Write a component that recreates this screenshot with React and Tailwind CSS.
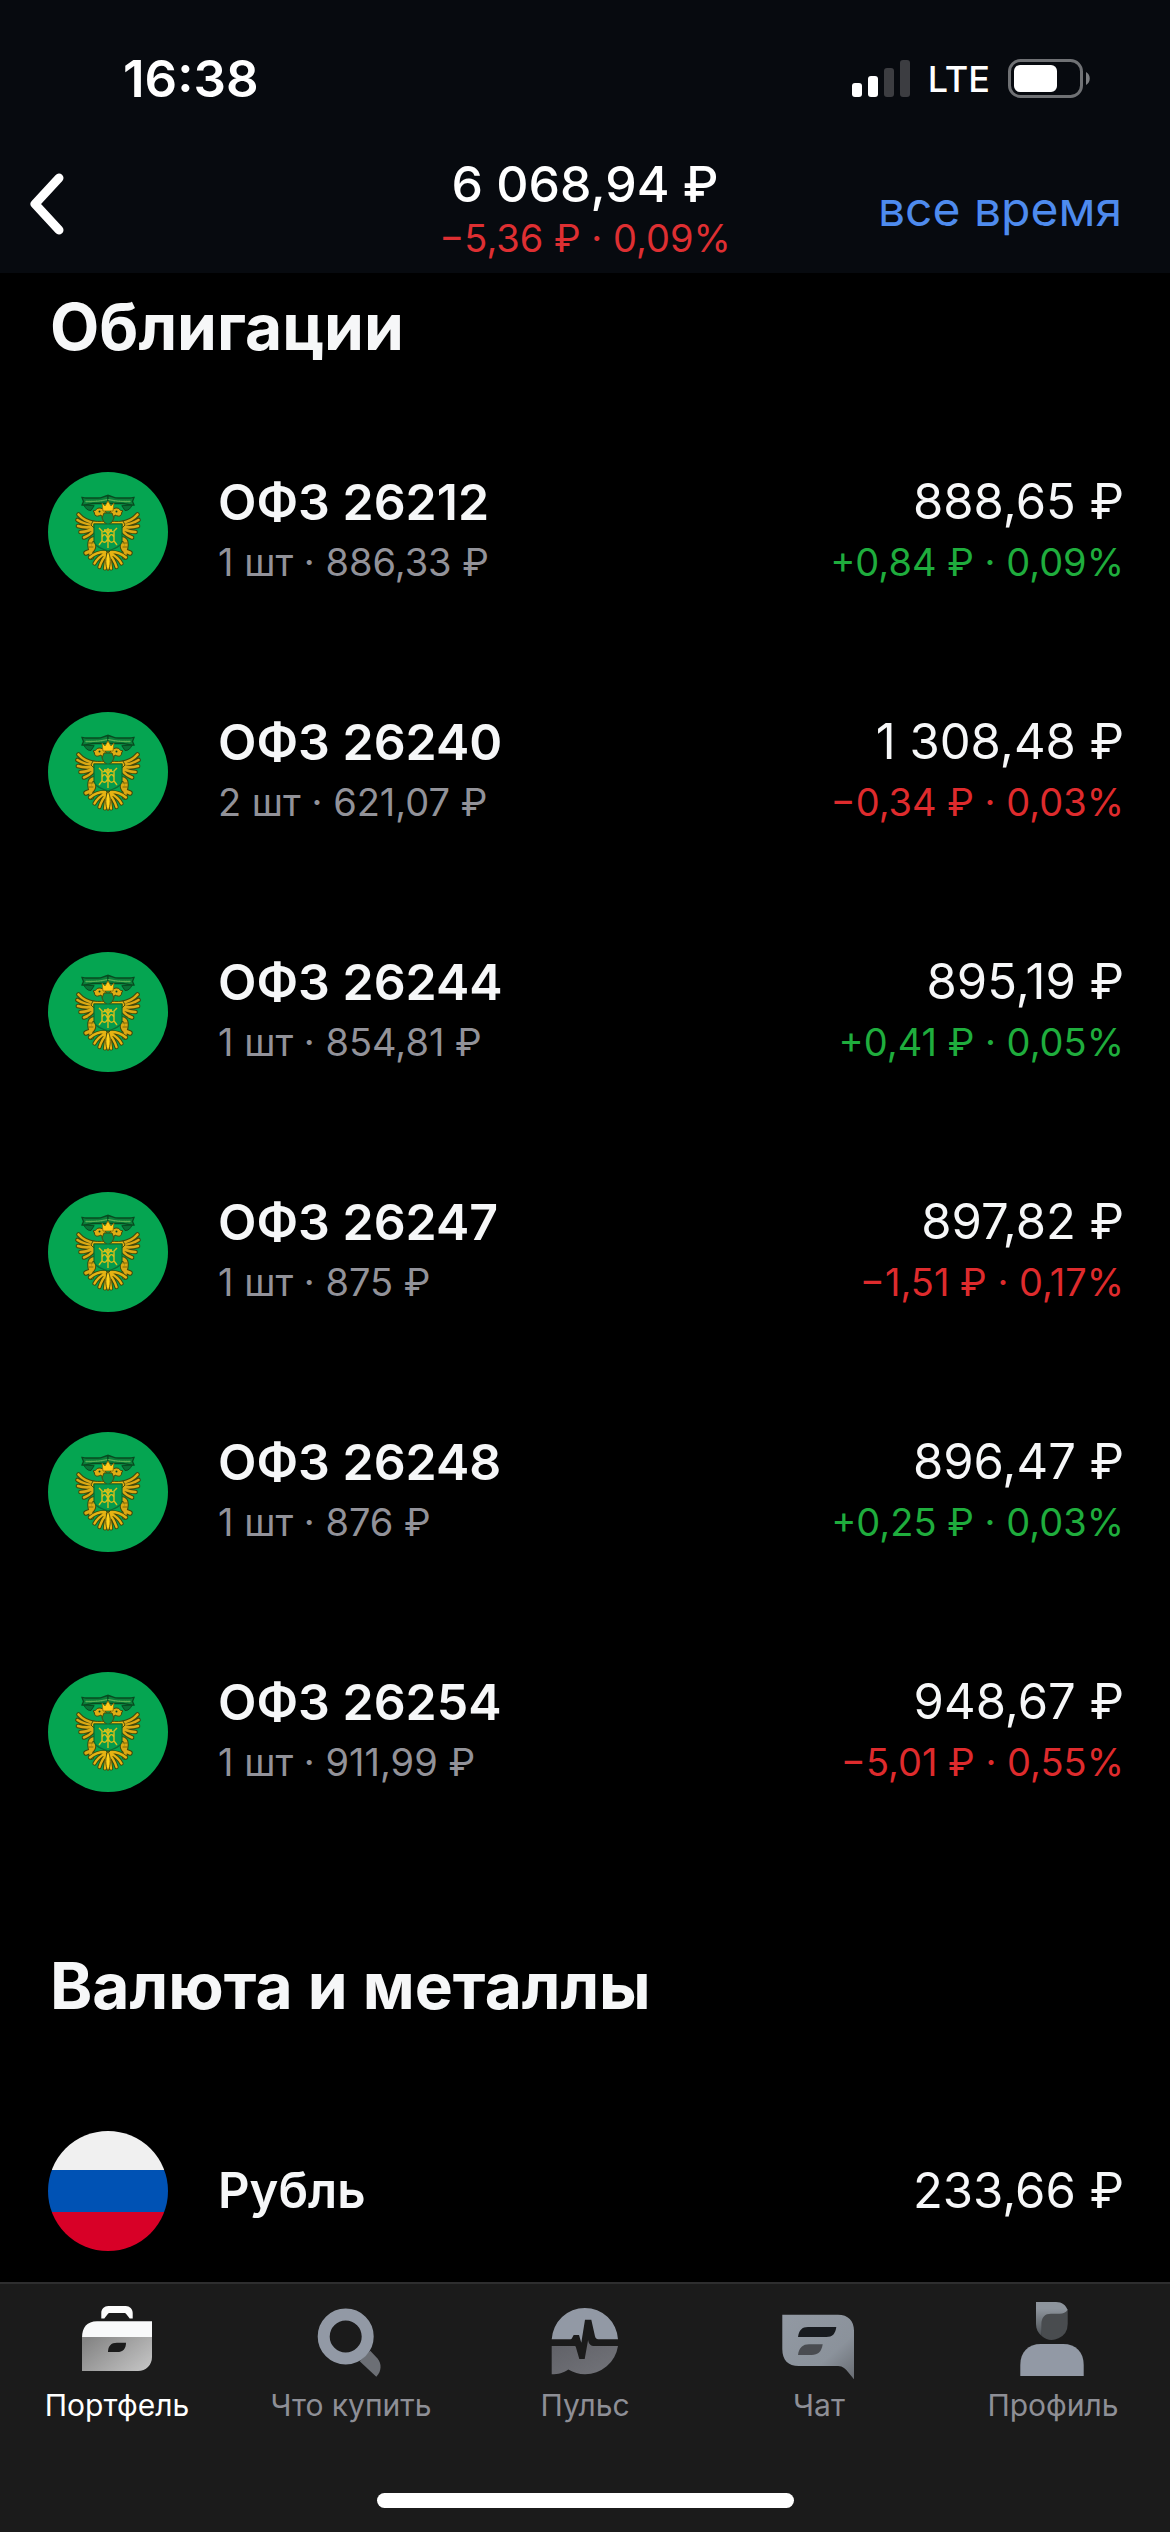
import React from "react";

const bonds = [
  { name: "ОФЗ 26212", detail: "1 шт · 886,33 ₽", value: "888,65 ₽", change: "+0,84 ₽ · 0,09%", up: true },
  { name: "ОФЗ 26240", detail: "2 шт · 621,07 ₽", value: "1 308,48 ₽", change: "−0,34 ₽ · 0,03%", up: false },
  { name: "ОФЗ 26244", detail: "1 шт · 854,81 ₽", value: "895,19 ₽", change: "+0,41 ₽ · 0,05%", up: true },
  { name: "ОФЗ 26247", detail: "1 шт · 875 ₽", value: "897,82 ₽", change: "−1,51 ₽ · 0,17%", up: false },
  { name: "ОФЗ 26248", detail: "1 шт · 876 ₽", value: "896,47 ₽", change: "+0,25 ₽ · 0,03%", up: true },
  { name: "ОФЗ 26254", detail: "1 шт · 911,99 ₽", value: "948,67 ₽", change: "−5,01 ₽ · 0,55%", up: false },
];

function StatusIcons() {
  return (
    <div className="flex items-center gap-[18px]">
      <svg className="h-[38px] w-[58px]" viewBox="0 0 58 38" aria-hidden="true">
        <rect x="0" y="23" width="10" height="14" rx="3" fill="#fff" />
        <rect x="16" y="16" width="10" height="21" rx="3" fill="#fff" />
        <rect x="32" y="8" width="10" height="29" rx="3" fill="#3c3d41" />
        <rect x="48" y="0" width="10" height="37" rx="3" fill="#3c3d41" />
      </svg>
      <span className="text-[36px] leading-[52px] font-medium">LTE</span>
      <svg className="h-[40px] w-[83px]" viewBox="0 0 83 40" aria-hidden="true">
        <rect x="1.5" y="1.5" width="72" height="36" rx="11" fill="none" stroke="#6f7174" strokeWidth="3" />
        <rect x="6" y="6" width="43" height="27" rx="6" fill="#fff" />
        <path d="M78 13c5 2.500 5 10.500 0 13z" fill="#7d7f82" />
      </svg>
    </div>
  );
}

const WING = "M46 51Q36 49 30.500 42.500M45 53Q36 52 29.500 48M45 55Q36 56 30 54M45 57Q38 60 32.500 60M45.500 59Q41 64 36 65.500";
const TAIL = "M57 80Q48 80 42 85.500M58 81Q50 85 46.500 91.500M59 82Q54 87 51.500 95M60 82Q57.500 88 57 96.500";
const LEG = "M45.500 67Q40.500 68 42.500 77M45.500 72Q46 77 43 79Q40 80 38 81M42.500 79L43.500 85";

function EmblemHalf() {
  return (
    <g strokeLinecap="round" fill="none">
      <path d="M60 23.500c-4 .5-6 2.500-10 2.500h-12c-2 0-3-.5-4-.5l1.500 4-1.500 3.500c4 .5 7-1.500 13-1.500h13z" fill="#0b7f3a" stroke="#084a20" strokeWidth="1.300" />
      <path d="M38 29.500c8 0 12 0 22-2" stroke="#58b154" strokeWidth="1.300" strokeDasharray="1.500 1" />
      <path d="M36 33.500c2 3 3 5 7 5l3-4.500z" fill="#0a7035" stroke="#084a20" />
      <path d={WING} stroke="#3f470c" strokeWidth="4.600" />
      <path d={WING} stroke="#dba914" strokeWidth="2.600" />
      <path d={LEG} stroke="#3f470c" strokeWidth="5.400" />
      <path d={LEG} stroke="#dba914" strokeWidth="3.400" />
      <path d="M41 71h4M41 75h4" stroke="#7d6a0b" />
      <path d={TAIL} stroke="#3f470c" strokeWidth="4.200" />
      <path d={TAIL} stroke="#e5b313" strokeWidth="2.400" />
      <path d="M60 49c-4 0-9 1-15 0l-2 4 3 3v-4h14z" fill="#e8b413" stroke="#4a4d0c" />
      <path d="M58 49c-3-1-4-4-5-6-2 1-5 2-6 0-1-1 0-3-2-4 4 0 3-3.500 7-3 4 .5 6 3 7 7z" fill="#e0ae14" stroke="#3f470c" />
      <circle cx="51.500" cy="39.500" r="1" fill="#084a20" />
    </g>
  );
}

function BondEmblem() {
  return (
    <svg className="size-[120px] shrink-0" viewBox="0 0 120 120" aria-hidden="true">
      <circle cx="60" cy="60" r="60" fill="#05a551" />
      <EmblemHalf />
      <g transform="matrix(-1 0 0 1 120 0)">
        <EmblemHalf />
      </g>
      <path d="M56 41h8l2 5-2 4-4 3-4-3-2-4z" fill="#0b9548" stroke="#4a4d0c" strokeWidth="1" />
      <path d="M54 31l3 3 3-5 3 5 3-3-1 8H55z" fill="#ffc91a" stroke="#7d6a0b" strokeWidth=".8" />
      <path d="M46 52h28v16c0 6-6 8-14 11-8-3-14-5-14-11z" fill="#069c4c" stroke="#0b6b33" strokeWidth="1.200" />
      <path d="M51 56l3 3v10l-3 4M69 56l-3 3v10l3 4M60 56v20M56 58h8M55 60c3-2 4 0 5 3 1-3 2-5 5-3M54 65c2-4 5-3 6 4 1-7 4-8 6-4M54 69c3 3 5 0 6-3 1 3 3 6 6 3" fill="none" stroke="#d9c01a" strokeWidth="1.400" />
      <path d="M60 79c-3 6-3 15 0 20 3-5 3-14 0-20z" fill="#ffd01a" stroke="#4a4d0c" strokeWidth=".9" />
    </svg>
  );
}

function RubleFlag() {
  return (
    <div className="flex size-[120px] shrink-0 flex-col overflow-hidden rounded-full" aria-hidden="true">
      <div className="h-[39px] bg-[#f0f0f0]" />
      <div className="h-[42px] bg-[#0052b4]" />
      <div className="h-[39px] bg-[#d80027]" />
    </div>
  );
}

function BriefcaseIcon() {
  return (
    <svg className="size-20" viewBox="0 0 80 80" aria-hidden="true">
      <defs>
        <linearGradient id="case" x1="0" y1="0.2" x2="1" y2="0.8">
          <stop offset="0" stopColor="#858585" />
          <stop offset="1" stopColor="#c2c2c2" />
        </linearGradient>
      </defs>
      <path d="M24.300 19.500V14c0-4 3-7 7-7h17.400c4 0 7 3 7 7v5.500h-3l-3.500-4.500c-.6-.8-1-1-2-1H32.800c-1 0-1.400.2-2 1l-3.500 4.500z" fill="#fcfcfc" />
      <path d="M5 38.500C5 28.500 10 22.300 20 22.300h55v16.200z" fill="#f8f9fa" />
      <path d="M5 38h70v20c0 8-6 14-14 14H5zM31 53c0-6 3-9.300 9-9.300h9c0 6-3 9.300-9 9.300z" fill="url(#case)" fillRule="evenodd" />
    </svg>
  );
}

function SearchIcon() {
  return (
    <svg className="size-20" viewBox="0 0 80 80" aria-hidden="true">
      <path d="M48.700 62.300L59.300 51.700l7 7.500c4.500 5 4.500 13 -1 18.500z" fill="#6c6f75" />
      <circle cx="34.700" cy="37.500" r="22" fill="none" stroke="#9299a5" strokeWidth="12" />
    </svg>
  );
}

function PulseIcon() {
  return (
    <svg className="size-20" viewBox="0 0 80 80" aria-hidden="true">
      <defs>
        <linearGradient id="pulseLow" x1="0" y1="0" x2="1" y2="1">
          <stop offset="0" stopColor="#5f6066" />
          <stop offset="1" stopColor="#73747a" />
        </linearGradient>
      </defs>
      <path d="M6.700 40.300a33.200 33.200 0 0 1 66.300 0H55c-3 0-4.500-.5-5-3l-3.700-16.600H40L36.300 43.700 34 36h-5.300l-1.500 2.800c-.5 1-1 1.500-2.500 1.500z" fill="#9299a5" />
      <path d="M6.700 47h23l1 .5L34.300 60h5.400l3.400-19c.7 4 2.500 6 6.500 6H73a33.200 33.200 0 0 1-33.200 28.200c-6 0-11-1.500-16.500-4.700-5 3.500-10 4.700-16.600 4.700z" fill="url(#pulseLow)" />
    </svg>
  );
}

function ChatIcon() {
  return (
    <svg className="size-20" viewBox="0 0 80 80" aria-hidden="true">
      <defs>
        <linearGradient id="chat" x1="0" y1="0" x2="1" y2="1">
          <stop offset="0" stopColor="#9299a3" />
          <stop offset="0.650" stopColor="#8b929b" />
          <stop offset="1" stopColor="#686c72" />
        </linearGradient>
      </defs>
      <path d="M3.300 15.700H59c10 0 16 6 16 16v48.600l-6-7.300c-4-5-6-6-12-6H20c-11 0-16.700-6-16.700-17z" fill="url(#chat)" />
      <path d="M19 38c1-7 4-10 10-10h28.300c-1 7-4 10-10 10z" fill="#181b1f" />
      <path d="M19 56c1-7.500 5-10.700 11-10.700h13.700c-1 7.500-5 10.700-11 10.700z" fill="#4a4c51" />
    </svg>
  );
}

function ProfileIcon() {
  return (
    <svg className="size-20" viewBox="0 0 80 80" aria-hidden="true">
      <defs>
        <linearGradient id="hair" x1="0" y1="0" x2="0" y2="1">
          <stop offset="0.200" stopColor="#8e959d" />
          <stop offset="1" stopColor="#4c5054" />
        </linearGradient>
      </defs>
      <path d="M54.700 10v15a15.800 15.800 0 0 1-26 12V14z" fill="#494c4f" />
      <path d="M23 3h20c6 0 10 3 11.500 8-2 2.700-4 3.700-8 3.700H38c-6 0-9.300 3.300-9.300 9.300v13C25 34 23 30 23 25z" fill="url(#hair)" />
      <path d="M7.300 77V66C7.300 53 15 45 28 45h22c13 0 20.700 8 20.700 21v11z" fill="#9299a5" />
    </svg>
  );
}

const tabs = [
  { label: "Портфель", Icon: BriefcaseIcon, active: true },
  { label: "Что купить", Icon: SearchIcon },
  { label: "Пульс", Icon: PulseIcon },
  { label: "Чат", Icon: ChatIcon },
  { label: "Профиль", Icon: ProfileIcon },
];

export default function App() {
  return (
    <div className="flex min-h-screen flex-col bg-black font-['Inter',sans-serif] text-[#f6f7f8]">
      <header className="sticky top-0 bg-[#070a0f] pb-2 text-white">
        <div className="flex h-[157px] items-center justify-between pr-[79px] pl-[123px]">
          <time className="text-[51px] leading-[60px] font-semibold">16:38</time>
          <StatusIcons />
        </div>
        <div className="grid h-[108px] grid-cols-[1fr_auto_1fr] items-center">
          <button type="button" aria-label="Назад" className="mb-4 ml-7 justify-self-start">
            <svg className="h-16 w-10" viewBox="0 0 40 64" fill="none" stroke="#fff" strokeWidth="9" strokeLinecap="round" strokeLinejoin="round" aria-hidden="true">
              <path d="M31 7L7 33l24 26" />
            </svg>
          </button>
          <h1 className="flex flex-col text-center">
            <span className="text-[50px] leading-[54px] font-medium">6 068,94 ₽</span>
            <span className="text-[38px] leading-[54px] font-normal text-[#de2f32]">−5,36 ₽ · 0,09%</span>
          </h1>
          <button type="button" className="mr-12 mb-1 justify-self-end text-[48px] leading-[60px] text-[#4e8bee]">
            все время
          </button>
        </div>
      </header>

      <main className="flex-1 pr-[46px] pl-12">
        <section>
          <h2 className="px-0.5 pt-[15px] pb-[46px] text-[64px] leading-[78px] font-bold">Облигации</h2>
          <ul>
            {bonds.map((bond) => (
              <li key={bond.name} className="flex items-center py-[60px]">
                <BondEmblem />
                <div className="ml-[50px] flex-1">
                  <p className="text-[50px] leading-[60px] font-semibold">{bond.name}</p>
                  <p className="text-[38px] leading-[60px] text-[#929299]">{bond.detail}</p>
                </div>
                <div className="text-right">
                  <p className="text-[49px] leading-[60px]">{bond.value}</p>
                  <p className={bond.up ? "text-[38px] leading-[60px] text-[#1fad3d]" : "text-[38px] leading-[60px] text-[#de2b2d]"}>
                    {bond.change}
                  </p>
                </div>
              </li>
            ))}
          </ul>
        </section>

        <section>
          <h2 className="px-0.5 pt-[95px] pb-[46px] text-[64px] leading-[78px] font-bold">Валюта и металлы</h2>
          <ul>
            <li className="flex items-center pt-[60px] pb-[30px]">
              <RubleFlag />
              <p className="ml-[50px] flex-1 text-[49px] leading-[60px] font-semibold">Рубль</p>
              <p className="text-[49px] leading-[60px]">233,66 ₽</p>
            </li>
          </ul>
        </section>
      </main>

      <nav className="sticky bottom-0 border-t-2 border-[#2e2e2f] bg-[#1b1b1b] pb-6">
        <ul className="grid grid-cols-5">
          {tabs.map(({ label, Icon, active }) => (
            <li key={label}>
              <a
                href="#"
                aria-current={active ? "page" : undefined}
                className={
                  active
                    ? "flex flex-col items-center gap-2 pt-[15px] text-[30px] leading-9 text-white"
                    : "flex flex-col items-center gap-2 pt-[15px] text-[30px] leading-9 text-[#8e8f96]"
                }
              >
                <Icon />
                {label}
              </a>
            </li>
          ))}
        </ul>
        <div className="mx-auto mt-[70px] h-[15px] w-[417px] rounded-full bg-white" />
      </nav>
    </div>
  );
}
